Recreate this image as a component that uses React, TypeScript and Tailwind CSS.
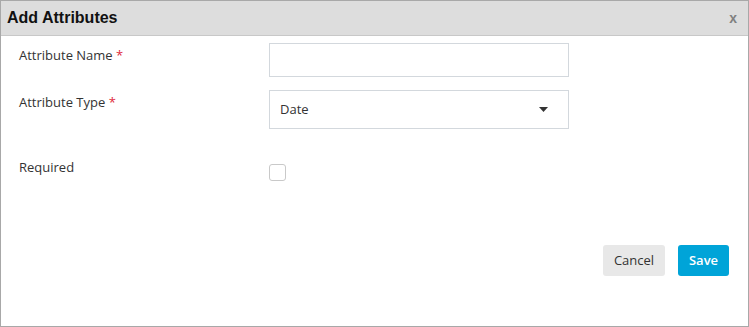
import React from "react";

const sans = "font-['Open_Sans',sans-serif]";

export default function App() {
  return (
    <div className="w-[749px] h-[327px] bg-white border border-[#a8a8a8] flex flex-col text-[#333333]">
      <div className="h-[35px] shrink-0 bg-[#dddddd] border-b border-[#c8c8c8] flex items-center justify-between pl-[6px] pr-[11px]">
        <h2 className="font-['Liberation_Sans',Arial,sans-serif] font-bold text-[16px] text-[#111111]">
          Add Attributes
        </h2>
        <span className="font-['Liberation_Sans',Arial,sans-serif] font-bold text-[14px] text-[#808080]">
          x
        </span>
      </div>

      <div className={`flex-1 flex flex-col pt-[7px] text-[13px] ${sans}`}>
        <div className="flex">
          <label className="w-[268px] pl-[18px] pt-[2px] leading-[20px]">
            Attribute Name <span className="text-[#e0293b]">*</span>
          </label>
          <input
            type="text"
            className="w-[300px] h-[34px] border border-[#d3d8dd] outline-none px-[10px]"
          />
        </div>

        <div className="flex mt-[13px]">
          <label className="w-[268px] pl-[18px] pt-[2px] leading-[20px]">
            Attribute Type <span className="text-[#e0293b]">*</span>
          </label>
          <div className="w-[300px] h-[39px] border border-[#d3d8dd] flex items-center justify-between pl-[10px] pr-[20px]">
            <span>Date</span>
            <svg width="9" height="5" viewBox="0 0 9 5">
              <path d="M0 0h9L4.5 5z" fill="#333" />
            </svg>
          </div>
        </div>

        <div className="flex mt-[28px]">
          <label className="w-[268px] pl-[18px] leading-[20px]">Required</label>
          <div className="pt-[7px]">
            <div className="w-[17px] h-[17px] border border-[#c9c9c9] rounded-[3px] bg-white" />
          </div>
        </div>

        <div className="flex justify-end gap-[13px] mt-[64px] pr-[19px]">
          <button className="h-[31px] w-[62px] rounded-[3px] bg-[#e8e8e8] text-[#333]">
            Cancel
          </button>
          <button className="h-[31px] w-[51px] rounded-[3px] bg-[#00a4d8] text-white font-semibold">
            Save
          </button>
        </div>
      </div>
    </div>
  );
}
